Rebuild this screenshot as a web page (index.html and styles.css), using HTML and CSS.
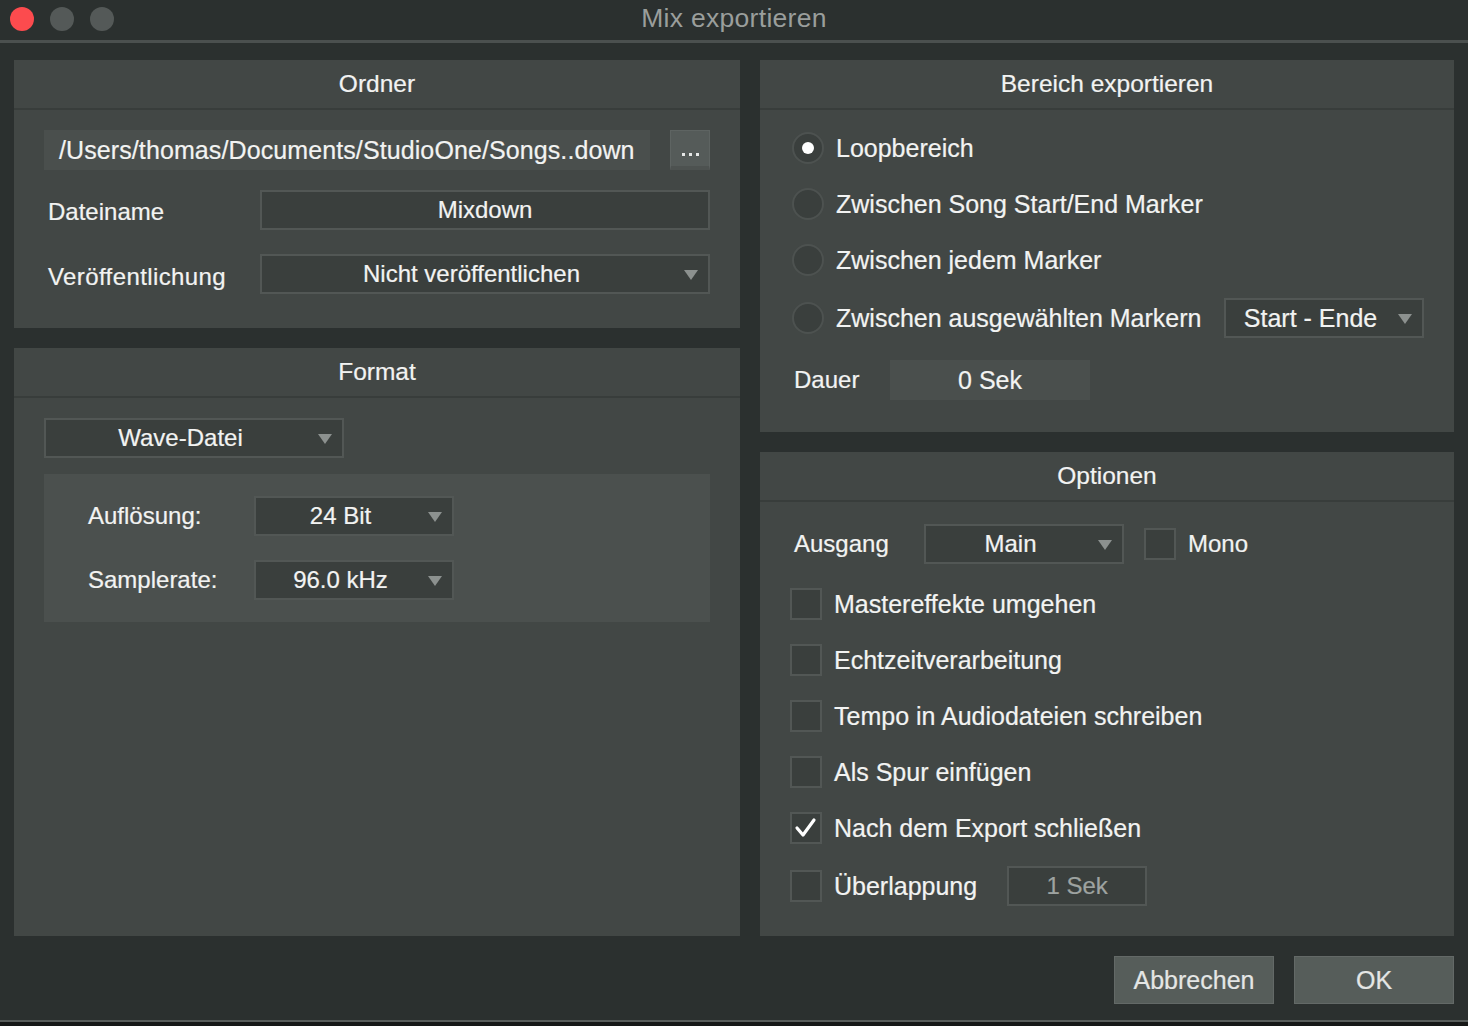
FILE: index.html
```html
<!DOCTYPE html>
<html lang="de">
<head>
<meta charset="utf-8">
<title>Mix exportieren</title>
<link rel="stylesheet" href="styles.css">
</head>
<body>
<div class="window">
  <div class="titlebar">
    <div class="lights">
      <span class="light red"></span>
      <span class="light gray"></span>
      <span class="light gray"></span>
    </div>
    <div class="title">Mix exportieren</div>
    <div></div>
  </div>

  <div class="main">
    <div class="col col-left">
      <section class="panel panel-ordner">
        <div class="panel-head">Ordner</div>
        <div class="panel-body ordner-body">
          <div class="path-row">
            <div class="path-field">/Users/thomas/Documents/StudioOne/Songs..down</div>
            <div class="dots-btn"><span class="dot"></span><span class="dot"></span><span class="dot"></span></div>
          </div>
          <div class="form-row row-name">
            <div class="form-label">Dateiname</div>
            <div class="field field-wide">Mixdown</div>
          </div>
          <div class="form-row row-pub">
            <div class="form-label">Veröffentlichung</div>
            <div class="field dropdown field-wide"><span class="dd-text">Nicht veröffentlichen</span><span class="arrow"></span></div>
          </div>
        </div>
      </section>

      <section class="panel panel-format">
        <div class="panel-head">Format</div>
        <div class="panel-body format-body">
          <div class="field dropdown dd-wave"><span class="dd-text">Wave-Datei</span><span class="arrow"></span></div>
          <div class="subbox">
            <div class="sub-row">
              <div class="sub-label">Auflösung:</div>
              <div class="field dropdown dd-200"><span class="dd-text">24 Bit</span><span class="arrow"></span></div>
            </div>
            <div class="sub-row">
              <div class="sub-label">Samplerate:</div>
              <div class="field dropdown dd-200"><span class="dd-text">96.0 kHz</span><span class="arrow"></span></div>
            </div>
          </div>
        </div>
      </section>
    </div>

    <div class="col col-right">
      <section class="panel panel-bereich">
        <div class="panel-head">Bereich exportieren</div>
        <div class="panel-body bereich-body">
          <div class="radio-row">
            <span class="radio checked"></span><span class="opt-label">Loopbereich</span>
          </div>
          <div class="radio-row">
            <span class="radio"></span><span class="opt-label">Zwischen Song Start/End Marker</span>
          </div>
          <div class="radio-row">
            <span class="radio"></span><span class="opt-label">Zwischen jedem Marker</span>
          </div>
          <div class="radio-row radio-row-last">
            <span class="radio"></span><span class="opt-label">Zwischen ausgewählten Markern</span>
            <div class="field dropdown dd-200 dd-marker"><span class="dd-text">Start - Ende</span><span class="arrow"></span></div>
          </div>
          <div class="dauer-row">
            <span class="dauer-label">Dauer</span>
            <div class="dauer-field">0 Sek</div>
          </div>
        </div>
      </section>

      <section class="panel panel-optionen">
        <div class="panel-head">Optionen</div>
        <div class="panel-body optionen-body">
          <div class="ausgang-row">
            <span class="ausgang-label">Ausgang</span>
            <div class="field dropdown dd-200"><span class="dd-text">Main</span><span class="arrow"></span></div>
            <span class="checkbox cb-mono"></span>
            <span class="mono-label">Mono</span>
          </div>
          <div class="check-row"><span class="checkbox"></span><span class="opt-label">Mastereffekte umgehen</span></div>
          <div class="check-row"><span class="checkbox"></span><span class="opt-label">Echtzeitverarbeitung</span></div>
          <div class="check-row"><span class="checkbox"></span><span class="opt-label">Tempo in Audiodateien schreiben</span></div>
          <div class="check-row"><span class="checkbox"></span><span class="opt-label">Als Spur einfügen</span></div>
          <div class="check-row"><span class="checkbox checked"><svg width="32" height="32" viewBox="0 0 32 32"><polyline points="7,16 13,23 24,8" fill="none" stroke="#ffffff" stroke-width="3.2" stroke-linecap="round" stroke-linejoin="round"/></svg></span><span class="opt-label">Nach dem Export schließen</span></div>
          <div class="check-row check-row-last"><span class="checkbox"></span><span class="opt-label">Überlappung</span><div class="field sek-field">1 Sek</div></div>
        </div>
      </section>
    </div>
  </div>

  <div class="footer">
    <div class="btn">Abbrechen</div>
    <div class="btn">OK</div>
  </div>
  <div class="bottom-edge"></div>
</div>
</body>
</html>
```

FILE: styles.css
```css
* { box-sizing: border-box; }

html, body {
  margin: 0;
  padding: 0;
  background: #2b302f;
}

body {
  width: 1468px;
  height: 1026px;
  overflow: hidden;
  font-family: "Liberation Sans", Arial, sans-serif;
  font-size: 24px;
  color: #f2f3f2;
  -webkit-text-stroke: 0.2px currentColor;
}

.window {
  width: 1468px;
  height: 1026px;
  display: flex;
  flex-direction: column;
}

/* Title bar */
.titlebar {
  height: 43px;
  border-bottom: 3px solid #4b504f;
  display: grid;
  grid-template-columns: 1fr auto 1fr;
  align-items: center;
}

.lights {
  display: flex;
  gap: 16px;
  padding-left: 10px;
  padding-bottom: 3px;
}

.light {
  width: 24px;
  height: 24px;
  border-radius: 50%;
  display: block;
}
.light.red { background: #fc4b4e; }
.light.gray { background: #545958; }

.title {
  font-size: 26.5px;
  color: #9a9e9c;
  letter-spacing: 0.3px;
  padding-bottom: 3px;
  -webkit-text-stroke: 0;
}

/* Main area */
.main {
  display: flex;
  gap: 20px;
  padding: 17px 14px 0 14px;
}

.col {
  display: flex;
  flex-direction: column;
  gap: 20px;
}
.col-left { width: 726px; }
.col-right { width: 694px; }

.panel {
  background: #424745;
  display: flex;
  flex-direction: column;
}
.panel-ordner { height: 268px; }
.panel-format { height: 588px; }
.panel-bereich { height: 372px; }
.panel-optionen { height: 484px; }

.panel-head {
  height: 50px;
  line-height: 48px;
  border-bottom: 2px solid #383d3b;
  text-align: center;
  font-size: 24.5px;
}

.panel-body {
  display: flex;
  flex-direction: column;
}

/* Generic fields */
.field {
  height: 40px;
  background: #3a3f3d;
  border: 2px solid #525755;
  display: flex;
  align-items: center;
  justify-content: center;
}

.dropdown .dd-text {
  flex: 1;
  text-align: center;
}

.arrow {
  width: 0;
  height: 0;
  border-left: 7px solid transparent;
  border-right: 7px solid transparent;
  border-top: 10px solid #8c918f;
  margin: 2px 10px 0 3px;
}

/* Ordner */
.ordner-body {
  padding: 20px 30px 0 30px;
}

.path-row {
  display: flex;
  gap: 20px;
  height: 40px;
}

.path-field {
  width: 606px;
  height: 40px;
  line-height: 40px;
  background: #4a4f4d;
  padding-left: 15px;
  white-space: nowrap;
  overflow: hidden;
  font-size: 25px;
  letter-spacing: 0.1px;
}

.dots-btn {
  width: 40px;
  height: 40px;
  background: #555b59;
  border: 1px solid #5e6462;
  border-bottom: 4px solid #4d5250;
  display: flex;
  justify-content: center;
  align-items: flex-start;
  gap: 4px;
  padding-top: 22px;
}
.dot {
  width: 3px;
  height: 3px;
  background: #e6e8e7;
  display: block;
}

.form-row {
  display: flex;
  align-items: center;
  height: 40px;
}
.row-name { margin-top: 20px; }
.row-pub { margin-top: 24px; }

.form-label {
  width: 216px;
  padding-left: 4px;
  padding-top: 4px;
}
.row-pub .form-label { padding-top: 6px; letter-spacing: 0.4px; }

.field-wide { width: 450px; }

/* Format */
.format-body {
  padding: 20px 30px 0 30px;
}

.dd-wave { width: 300px; }

.subbox {
  margin-top: 16px;
  height: 148px;
  background: #4b504e;
  padding: 22px 0 0 44px;
  display: flex;
  flex-direction: column;
  gap: 24px;
}

.sub-row {
  display: flex;
  align-items: center;
  height: 40px;
}

.sub-label { width: 166px; }

.dd-200 { width: 200px; }

/* Bereich */
.bereich-body {
  padding: 18px 30px 0 32px;
}

.radio-row {
  display: flex;
  align-items: center;
  height: 40px;
  margin-bottom: 16px;
}
.radio-row-last { margin-top: 2px; margin-bottom: 22px; }

.radio {
  width: 32px;
  height: 32px;
  border-radius: 50%;
  background: #3a3f3d;
  border: 2px solid #4d5250;
  display: flex;
  align-items: center;
  justify-content: center;
  flex: none;
}
.radio.checked::after {
  content: "";
  width: 12px;
  height: 12px;
  border-radius: 50%;
  background: #ffffff;
}

.opt-label {
  margin-left: 12px;
  font-size: 25px;
  white-space: nowrap;
}

.dd-marker { margin-left: auto; font-size: 25px; }

.dauer-row {
  display: flex;
  align-items: center;
  height: 40px;
}
.dauer-label {
  width: 98px;
  padding-left: 2px;
}
.dauer-field {
  width: 200px;
  height: 40px;
  background: #4a4f4d;
  display: flex;
  align-items: center;
  justify-content: center;
  font-size: 25px;
}

/* Optionen */
.optionen-body {
  padding: 22px 30px 0 30px;
}

.ausgang-row {
  display: flex;
  align-items: center;
  height: 40px;
  margin-bottom: 20px;
}
.ausgang-label {
  width: 134px;
  padding-left: 4px;
}

.checkbox {
  width: 32px;
  height: 32px;
  background: #3a3f3d;
  border: 2px solid #525755;
  flex: none;
  display: flex;
  align-items: center;
  justify-content: center;
}
.checkbox svg { display: block; margin: -2px; }

.cb-mono { margin-left: 20px; }
.mono-label { margin-left: 12px; }

.check-row {
  display: flex;
  align-items: center;
  height: 40px;
  margin-bottom: 16px;
}
.check-row-last { margin-top: 2px; }

.sek-field {
  width: 140px;
  margin-left: 30px;
  color: #9ea3a1;
}

/* Footer */
.footer {
  display: flex;
  justify-content: flex-end;
  gap: 20px;
  padding: 20px 14px 0 0;
}

.btn {
  width: 160px;
  height: 48px;
  background: #565d5a;
  border: 1px solid #636967;
  color: #e4e6e5;
  display: flex;
  align-items: center;
  justify-content: center;
  font-size: 25px;
}

.bottom-edge {
  margin-top: 16px;
  border-top: 2px solid #585d5b;
  height: 6px;
  background: #161817;
}
```
